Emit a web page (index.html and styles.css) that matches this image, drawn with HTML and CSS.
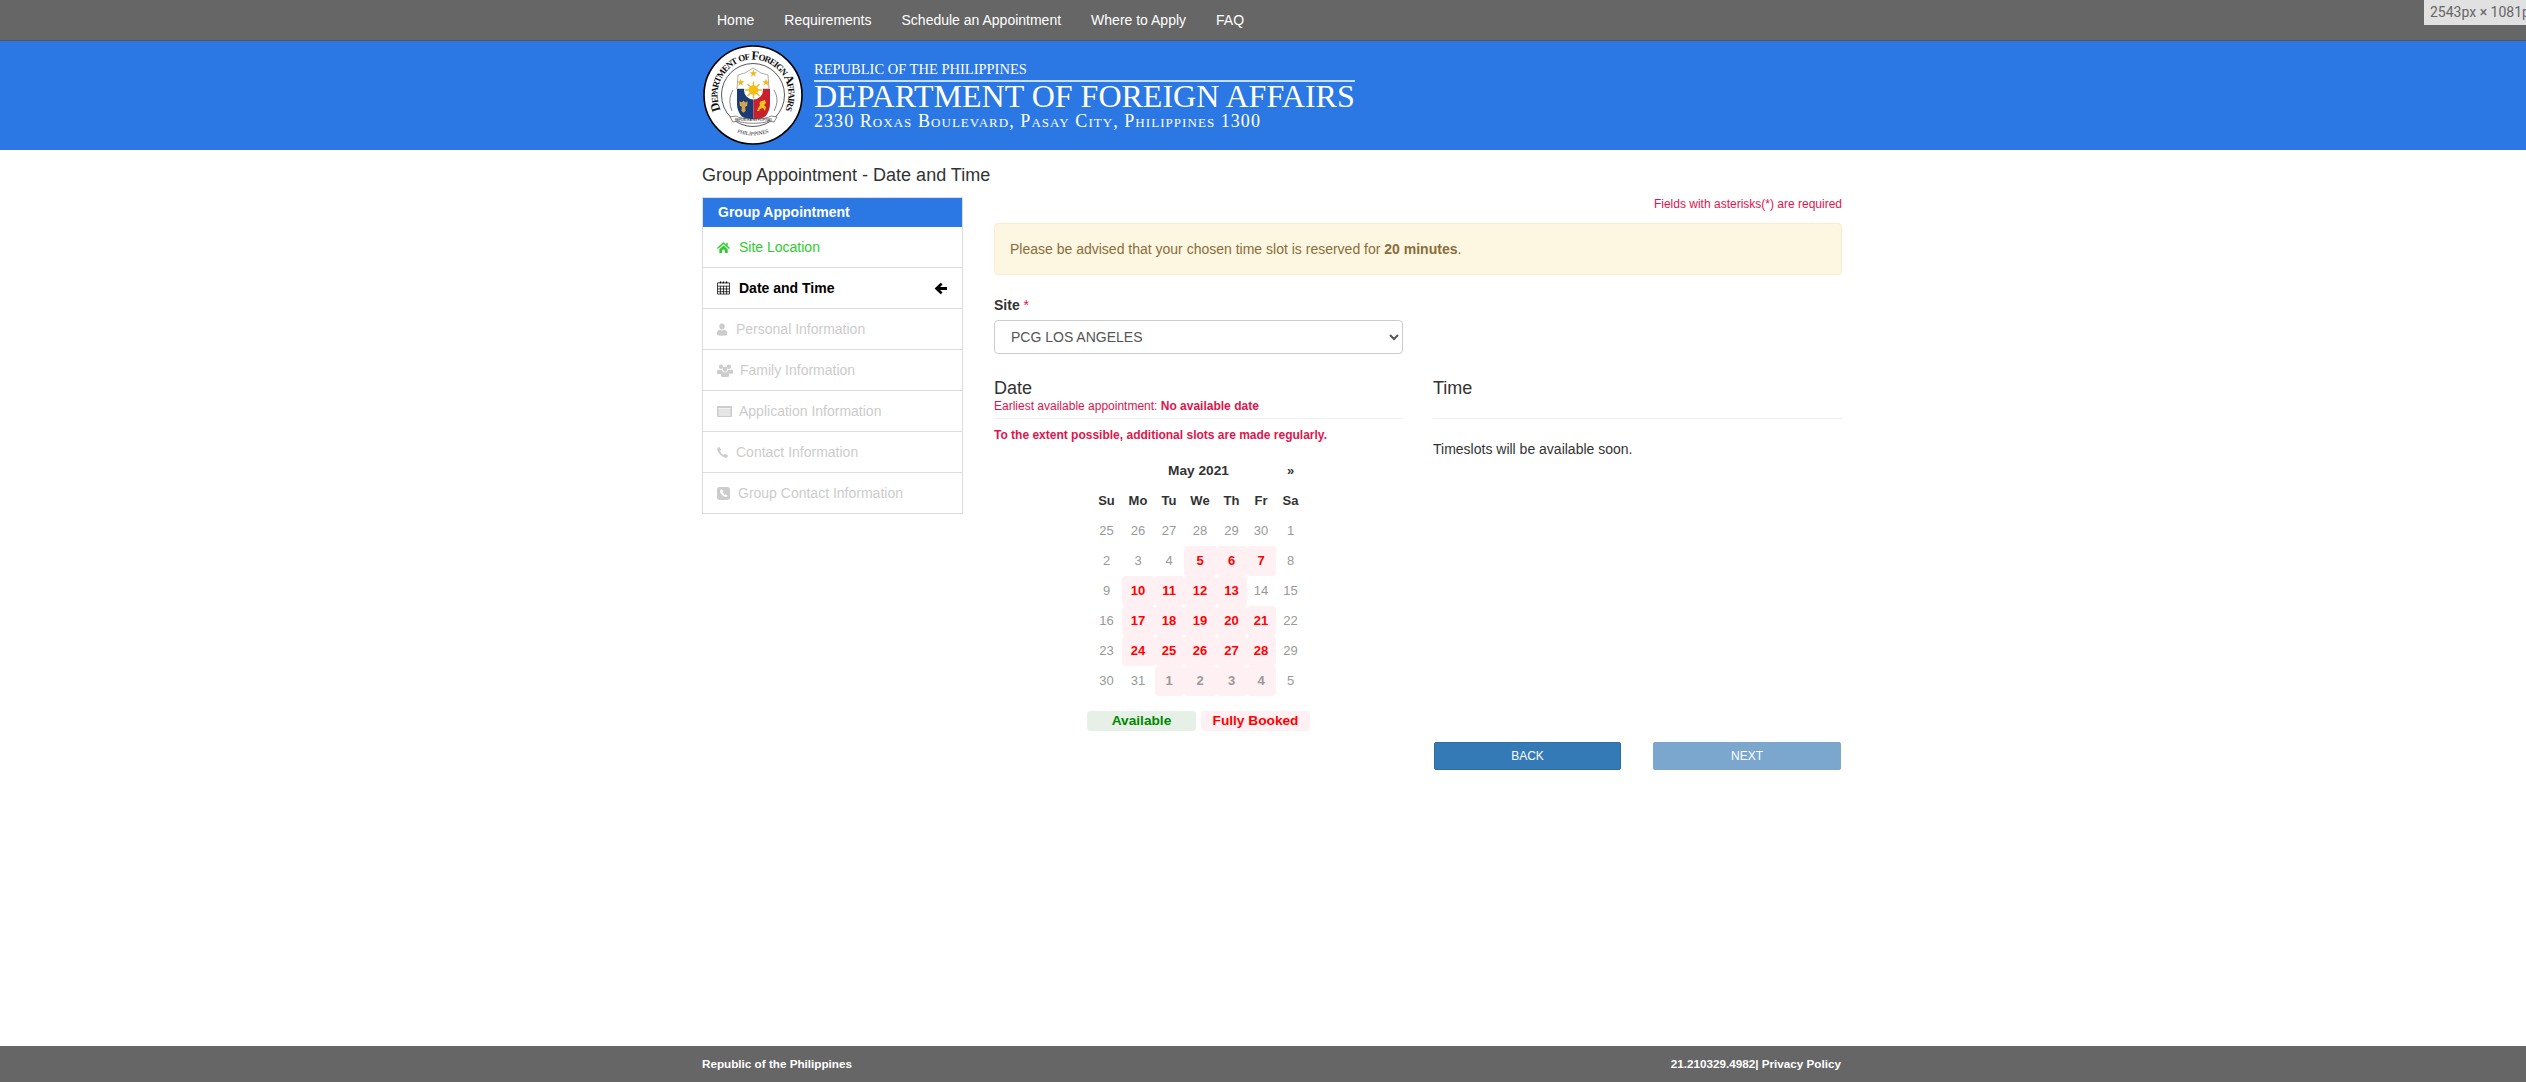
FILE: index.html
```html
<!DOCTYPE html>
<html lang="en">
<head>
<meta charset="utf-8">
<title>Group Appointment - Date and Time</title>
<link rel="stylesheet" href="styles.css">
</head>
<body>
<nav class="topnav">
  <div class="wrap navlinks">
    <a>Home</a><a>Requirements</a><a>Schedule an Appointment</a><a>Where to Apply</a><a>FAQ</a>
  </div>
</nav>
<div class="sizetip">2543px × 1081px</div>
<header class="banner">
  <div class="wrap bannerrow">
    <svg class="seal" viewBox="0 0 100 100" role="img" aria-label="Seal of the Department of Foreign Affairs">
      <defs>
        <path id="arcTop" d="M17.800 65 A35.500 35.500 0 1 1 82.200 65"/>
        <path id="arcBot" d="M29 85 A43 43 0 0 0 71 85"/>
      </defs>
      <circle cx="50" cy="50" r="49" fill="#fff" stroke="#000" stroke-width="1.600"/>
      <circle cx="50" cy="50" r="31.500" fill="#fff" stroke="#111" stroke-width=".7"/>
      <text class="sealtext"><textPath href="#arcTop" textLength="142" lengthAdjust="spacing">Department of Foreign Affairs</textPath></text>
      <text class="sealsmall"><textPath href="#arcBot" startOffset="50%" text-anchor="middle">PHILIPPINES</textPath></text>
      <path d="M29 66c-3-8-3-14 1-21M71 66c4-8 4-14 0-21" fill="none" stroke="#888" stroke-width="1"/>
      <path d="M35 30l7-2 8-5 8 5 7 2 1 14H34z" fill="#fff" stroke="#999" stroke-width=".8"/>
      <path d="M34 44h16.500v30c-6 0-11-1-13-4-2-3-3.500-7-3.500-11z" fill="#1b3a78"/>
      <path d="M50.500 44H67v15c0 4-1.500 8-3.500 11-2 3-7 4-13 4z" fill="#c8202f"/>
      <circle cx="50.500" cy="45" r="9.500" fill="#fff"/>
      <g stroke="#f3b71c" stroke-width="1.300">
        <path d="M50.500 36.500v17M42 45h17M44.500 39l12 12M56.500 39l-12 12"/>
      </g>
      <circle cx="50.500" cy="45" r="4.800" fill="#f6bd16"/>
      <path d="M50.300 24.500l1 2.700 2.800.1-2.200 1.700.8 2.700-2.400-1.600-2.400 1.600.8-2.700-2.200-1.700 2.800-.1zM37.700 33.500l1 2.700 2.800.1-2.200 1.700.8 2.700-2.400-1.600-2.400 1.600.8-2.700-2.200-1.700 2.800-.1zM63 33.500l1 2.700 2.800.1-2.200 1.700.8 2.700-2.400-1.600-2.400 1.600.8-2.700-2.200-1.700 2.800-.1z" fill="#f0b81c"/>
      <path d="M36 56l3 1 1.500-2 1.500 2 3-1-.5 5-2 1 .5 4-2.500 2-2.500-2 .5-4-2-1z" fill="#caa55a" stroke="#111" stroke-width=".4"/>
      <path d="M54 66c1-3 2-4 3-6-1-2 0-4 2-4l3-1 1 3-2 2 2 2-1 4-2-3-3 1-1 2z" fill="#f2c21e"/>
      <path d="M27 72l6-1c5 4 30 4 35 0l6 1-3 5-5-1c-6 3-25 3-31 0l-5 1z" fill="#fff" stroke="#555" stroke-width=".7"/>
      <text class="sealtiny" x="50.500" y="75.500" text-anchor="middle">REPUBLIKA NG PILIPINAS</text>
    </svg>
    <div class="bannertext">
      <div class="bt-small">REPUBLIC OF THE PHILIPPINES</div>
      <div class="bt-large">DEPARTMENT OF FOREIGN AFFAIRS</div>
      <div class="bt-addr">2330 Roxas Boulevard, Pasay City, Philippines 1300</div>
    </div>
  </div>
</header>
<main class="wrap page">
  <h1 class="pagetitle">Group Appointment - Date and Time</h1>
  <div class="layout">
    <aside class="steps">
      <div class="steps-head">Group Appointment</div>
      <div class="step step-done">
        <svg class="ic ic-home" viewBox="0 0 14 14"><path fill="currentColor" d="M7 1.200L0 7.600l1 1L7 3.200l6 5.400 1-1-2.500-2.300V2H10v2z M2.500 8.900L7 4.800l4.500 4.100V13H8.500V9.500h-3V13h-3z"/></svg>
        <span>Site Location</span>
      </div>
      <div class="step step-active">
        <svg class="ic ic-cal" viewBox="0 0 14 14"><path fill="currentColor" d="M3 0h1.500v2H3zM6.200 0h1.500v2H6.200zM9.500 0H11v2H9.500z"/><path fill="none" stroke="currentColor" stroke-width=".8" d="M.5 1.500h13v12H.5zM.5 5h13M.5 8h13M.5 11h13M3.700 5v8.500M7 5v8.500M10.300 5v8.500"/></svg>
        <span>Date and Time</span>
        <svg class="ic-arrow" viewBox="0 0 14 14"><path fill="currentColor" d="M7.200.8l2 2-2.600 2.500H14v3.400H6.600l2.600 2.500-2 2L.6 7z"/></svg>
      </div>
      <div class="step step-off">
        <svg class="ic ic-user" viewBox="0 0 11 14"><path fill="currentColor" d="M5.500.5c1.900 0 3 1.400 3 3.300 0 1.700-1 3.200-3 3.200s-3-1.500-3-3.200C2.500 1.900 3.600.5 5.500.5zM3 7.300c.7.600 1.500.9 2.500.9S7.300 7.900 8 7.300c2 .5 3 1.300 3 3V13c-1.500.6-3.400.9-5.500.9S1.500 13.600 0 13v-2.700c0-1.700 1-2.500 3-3z"/></svg>
        <span>Personal Information</span>
      </div>
      <div class="step step-off">
        <svg class="ic ic-group" viewBox="0 0 16 14"><path fill="currentColor" d="M4 1.500c1.300 0 2 .9 2 2.200S5.300 6 4 6 2 5 2 3.700s.7-2.200 2-2.200zM12 1.500c1.300 0 2 .9 2 2.200S13.300 6 12 6s-2-1-2-2.300.7-2.200 2-2.200zM8 3.500c1.400 0 2.300 1 2.300 2.400S9.400 8.500 8 8.500 5.700 7.300 5.700 5.900 6.600 3.500 8 3.500zM1.500 6.500c.7.400 1.500.6 2.500.5l.9.100c.3.800.7 1.300 1.100 1.600-1.400.5-2 1.100-2 2.300H.1V8.200c0-.9.500-1.400 1.400-1.700zM14.500 6.500c.9.300 1.400.8 1.400 1.700v2.600H12c0-1.200-.6-1.800-2-2.300.4-.3.800-.8 1.100-1.600L12 7c1 .1 1.800-.1 2.500-.5zM6 9c.6.300 1.200.4 2 .4s1.400-.1 2-.4c1.400.4 2 1 2 2v2.400c-1.200.4-2.500.6-4 .6s-2.800-.2-4-.6V11c0-1 .6-1.600 2-2z"/></svg>
        <span>Family Information</span>
      </div>
      <div class="step step-off">
        <svg class="ic ic-list" viewBox="0 0 15 11"><path fill="currentColor" fill-rule="evenodd" d="M1 0h13c.6 0 1 .4 1 1v9c0 .6-.4 1-1 1H1c-.6 0-1-.4-1-1V1c0-.6.4-1 1-1zm.5 2.200v1.300h12V2.200zm0 2.300v1h12v-1zm0 2v1h12v-1zm0 2v1h12v-1z"/></svg>
        <span>Application Information</span>
      </div>
      <div class="step step-off">
        <svg class="ic ic-phone" viewBox="0 0 12 12"><path fill="currentColor" d="M2.600.2l1.800 2.500c.2.300.1.600-.1.900L3.300 4.800c.8 1.600 2.200 3 3.900 3.900l1.200-1c.3-.2.600-.3.900-.1l2.500 1.800c.3.200.3.500.1.800-.8 1.200-1.700 1.700-2.800 1.600C4.700 10.300 1.700 7.300.2 2.900.1 1.800.6.900 1.800.1c.3-.2.600-.2.800.1z"/></svg>
        <span>Contact Information</span>
      </div>
      <div class="step step-off">
        <svg class="ic ic-psq" viewBox="0 0 13 13"><path fill="currentColor" fill-rule="evenodd" d="M2.500 0h8C11.900 0 13 1.100 13 2.500v8c0 1.400-1.100 2.500-2.500 2.500h-8C1.100 13 0 11.900 0 10.500v-8C0 1.100 1.100 0 2.500 0zM4.300 2.500c-.8.400-1.400 1-1.300 1.900.9 2.700 2.800 4.700 5.500 5.600.9.100 1.600-.5 2-1.300l-1.800-1.500-1.100.8C7.400 7.400 6.300 6.300 5.700 5.200l.8-1-1.400-1.800z"/></svg>
        <span>Group Contact Information</span>
      </div>
    </aside>
    <section class="content">
      <p class="required-note">Fields with asterisks(*) are required</p>
      <div class="alert">Please be advised that your chosen time slot is reserved for <strong>20 minutes</strong>.</div>
      <div class="split">
        <div>
          <label class="fieldlabel" for="site">Site <span class="star">*</span></label>
          <select id="site" class="sitesel"><option>PCG LOS ANGELES</option></select>
        </div>
      </div>
      <div class="split picker">
        <div class="datecol">
          <div class="sechead">
            <h2 class="sectitle">Date</h2>
            <p class="earliest">Earliest available appointment: <strong>No available date</strong></p>
          </div>
          <p class="extent">To the extent possible, additional slots are made regularly.</p>
          <div class="cal">
            <div class="cal-month">May 2021</div><div class="cal-next">»</div>
            <div class="dow">Su</div><div class="dow">Mo</div><div class="dow">Tu</div><div class="dow">We</div><div class="dow">Th</div><div class="dow">Fr</div><div class="dow">Sa</div>
            <div class="d">25</div><div class="d">26</div><div class="d">27</div><div class="d">28</div><div class="d">29</div><div class="d">30</div><div class="d">1</div>
            <div class="d">2</div><div class="d">3</div><div class="d">4</div><div class="d full">5</div><div class="d full">6</div><div class="d full">7</div><div class="d">8</div>
            <div class="d">9</div><div class="d full">10</div><div class="d full">11</div><div class="d full">12</div><div class="d full">13</div><div class="d">14</div><div class="d">15</div>
            <div class="d">16</div><div class="d full">17</div><div class="d full">18</div><div class="d full">19</div><div class="d full">20</div><div class="d full">21</div><div class="d">22</div>
            <div class="d">23</div><div class="d full">24</div><div class="d full">25</div><div class="d full">26</div><div class="d full">27</div><div class="d full">28</div><div class="d">29</div>
            <div class="d">30</div><div class="d">31</div><div class="d next">1</div><div class="d next">2</div><div class="d next">3</div><div class="d next">4</div><div class="d">5</div>
          </div>
          <div class="legend">
            <span class="lg lg-ok">Available</span><span class="lg lg-full">Fully Booked</span>
          </div>
        </div>
        <div class="timecol">
          <div class="sechead">
            <h2 class="sectitle">Time</h2>
          </div>
          <p class="timemsg">Timeslots will be available soon.</p>
          <div class="actions">
            <button class="btn" type="button">BACK</button>
            <button class="btn btn-off" type="button">NEXT</button>
          </div>
        </div>
      </div>
    </section>
  </div>
</main>
<footer class="foot">
  <div class="wrap footrow">
    <span>Republic of the Philippines</span>
    <span>21.210329.4982| Privacy Policy</span>
  </div>
</footer>
</body>
</html>
```
FILE: styles.css
```css
* { box-sizing: border-box; }
html, body { margin: 0; padding: 0; }
body {
  min-height: 100vh;
  display: flex;
  flex-direction: column;
  background: #fff;
  color: #333;
  font-family: "Liberation Sans", Arial, sans-serif;
  font-size: 14px;
  line-height: 20px;
}
.wrap { width: 1140px; margin-left: 702px; }

.topnav { height: 41px; background: #666; border-bottom: 1px solid #555; }
.navlinks { display: flex; gap: 30px; padding-left: 15px; height: 40px; align-items: center; }
.navlinks a { color: #fff; font-size: 14px; }

.sizetip {
  position: absolute; top: 0; right: 0; width: 102px; height: 25px;
  padding-left: 6px; overflow: hidden; white-space: nowrap;
  background: #e1e1e1; color: #666; font-family: Roboto, sans-serif;
  font-size: 14px; line-height: 25px;
}

.banner { height: 109px; background: #2b78e4; }
.bannerrow { display: flex; padding: 4px 0 0 1px; }
.seal { width: 100px; height: 100px; flex: none; }
.sealtext { font-family: "Liberation Serif", serif; font-size: 12.500px; font-variant: small-caps; font-weight: 700; fill: #111; }
.sealsmall { font-family: "Liberation Serif", serif; font-size: 5.500px; fill: #222; }
.sealtiny { font-family: "Liberation Sans", sans-serif; font-size: 3px; fill: #222; }
.bannertext { margin-left: 11px; padding-top: 17px; color: #fff; font-family: "Liberation Serif", serif; }
.bt-small { font-size: 14.500px; line-height: 14px; }
.bt-large {
  margin-top: 4px; border-top: 2px solid #c9def8;
  font-size: 32px; line-height: 29px;
}
.bt-addr { font-size: 18px; font-variant: small-caps; letter-spacing: 1.050px; line-height: 20px; }

.page { flex: 1; }
.pagetitle { margin: 15px 0 12px; font-size: 18px; font-weight: 400; line-height: 20px; color: #333; }
.layout { display: flex; gap: 31px; }

.steps { width: 261px; flex: none; align-self: flex-start; border: 1px solid #ddd; }
.steps-head {
  height: 29px; padding-left: 15px;
  background: #2b78e4; color: #fff; font-weight: 700; line-height: 29px;
}
.step { display: flex; align-items: center; height: 41px; padding: 0 15px 0 14px; border-bottom: 1px solid #ddd; }
.step:last-child { height: 40px; border-bottom: 0; }
.step-done { color: #2ecb2e; }
.step-active { color: #000; font-weight: 700; }
.step-off { color: #ccc; }
.ic { flex: none; display: block; }
.ic-home { width: 13px; height: 13px; margin-right: 9px; }
.ic-cal { width: 13px; height: 14px; margin-right: 9px; }
.ic-user { width: 10px; height: 13px; margin-right: 9px; }
.ic-group { width: 16px; height: 14px; margin-right: 7px; }
.ic-list { width: 15px; height: 11px; margin-right: 7px; }
.ic-phone { width: 11px; height: 11px; margin-right: 8px; }
.ic-psq { width: 13px; height: 13px; margin-right: 8px; }
.ic-arrow { width: 13px; height: 13px; margin-left: auto; margin-right: 0; }

.content { width: 848px; }
.required-note { margin: 0 0 12px; text-align: right; color: #e0144c; font-size: 12px; line-height: 14px; }
.alert {
  height: 52px; padding: 15px; margin-bottom: 20px;
  background: #fdf6e1; border: 1px solid #faebcc; border-radius: 4px; color: #8a6d3b;
}
.split { display: grid; grid-template-columns: 409px 409px; column-gap: 30px; }
.fieldlabel { display: block; margin-bottom: 5px; font-weight: 700; font-size: 14px; line-height: 20px; }
.star { color: #e0144c; font-weight: 400; }
.sitesel {
  display: block; width: 100%; height: 34px; padding: 6px 12px;
  background: #fff; border: 1px solid #ccc; border-radius: 4px; color: #555;
  font-family: "Liberation Sans", Arial, sans-serif; font-size: 14px;
}
.picker { margin-top: 24px; }
.sechead { height: 41px; border-bottom: 1px solid #eee; }
.sectitle { margin: 0; font-size: 18px; font-weight: 400; line-height: 20px; color: #333; }
.earliest { margin: 1px 0 0; color: #e0144c; font-size: 12px; line-height: 14px; }
.extent { margin: 9px 0 14px; color: #e0144c; font-size: 12px; font-weight: 700; line-height: 14px; }

.cal {
  display: grid; justify-content: center;
  grid-template-columns: 30px 33px 29px 33px 30px 29px 30px;
  grid-auto-rows: 30px;
  font-size: 13px;
  text-align: center;
}
.cal > div { line-height: 30px; }
.cal-month { grid-column: 2 / 7; font-weight: 700; font-size: 13.700px; }
.cal-next { font-weight: 700; }
.dow { font-weight: 700; }
.d { color: #999; border-radius: 4px; }
.full, .next { background: #fff0f3; font-weight: 700; }
.full { color: #f00; }
.next { color: #999; }

.legend { display: flex; justify-content: center; gap: 5px; margin-top: 15px; }
.lg { width: 109px; height: 20px; border-radius: 4px; text-align: center; font-weight: 700; font-size: 13.700px; line-height: 20px; }
.lg-ok { background: #e6f0e6; color: #080; }
.lg-full { background: #fff0f3; color: #f00; }

.timemsg { margin: 20px 0 283px; }
.actions { display: flex; gap: 32px; padding: 0 1px; }
.btn {
  flex: none; width: 187px; height: 28px; padding: 0;
  background: #337ab7; border: 1px solid #2e6da4; border-radius: 2px; color: #fff;
  font-family: "Liberation Sans", Arial, sans-serif; font-size: 12px;
}
.btn-off { flex: 1; background: #7ba7cf; border-color: #7ba7cf; }

.foot { height: 36px; background: #666; color: #fff; font-size: 11.700px; font-weight: 700; }
.footrow { display: flex; justify-content: space-between; height: 36px; align-items: center; padding-right: 1px; }
```
